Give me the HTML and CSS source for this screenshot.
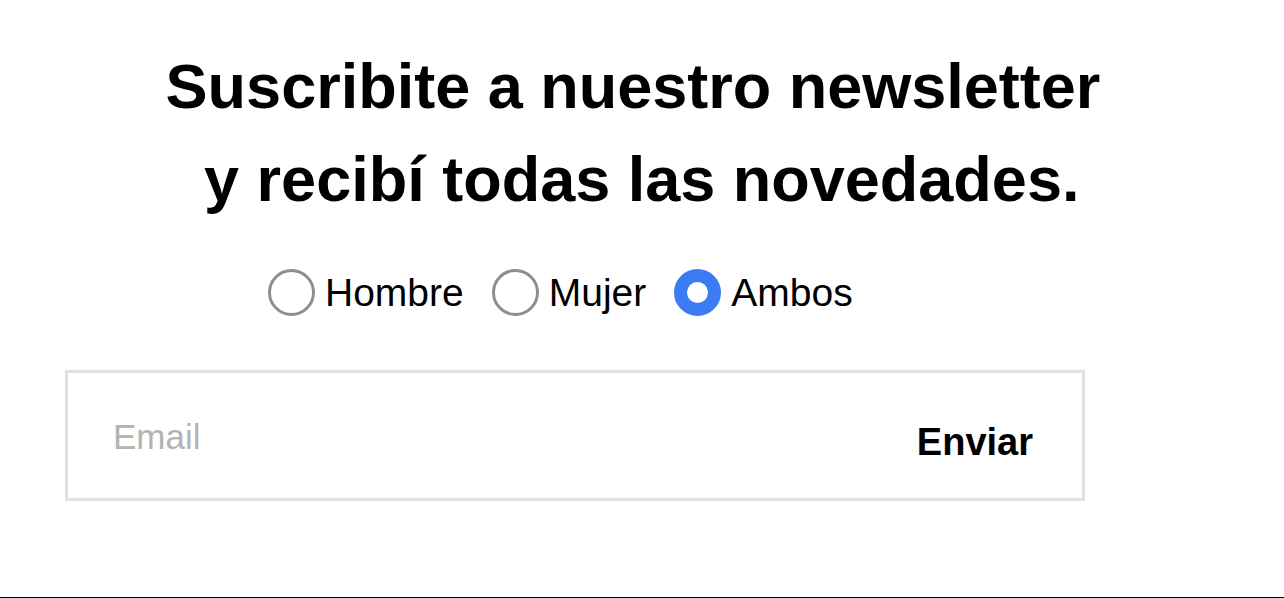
FILE: index.html
```html
<!DOCTYPE html>
<html lang="es">
<head>
<meta charset="utf-8">
<title>Newsletter</title>
<link rel="stylesheet" href="styles.css">
</head>
<body>
<div class="page">
  <h1 class="title">Suscribite a nuestro newsletter<br>&nbsp;y recibí todas las novedades.</h1>
  <div class="options">
    <label class="opt"><span class="radio"></span><span class="opt-text">Hombre</span></label>
    <label class="opt"><span class="radio"></span><span class="opt-text">Mujer</span></label>
    <label class="opt"><span class="radio checked"></span><span class="opt-text">Ambos</span></label>
  </div>
  <form class="form">
    <input class="email" type="text" placeholder="Email">
    <button class="send" type="button">Enviar</button>
  </form>
</div>
</body>
</html>
```
FILE: styles.css
```css
html, body {
  margin: 0;
  padding: 0;
  background: #fff;
}
.page {
  box-sizing: border-box;
  height: 598px;
  border-bottom: 1px solid #000;
  padding-top: 40px;
  font-family: "Liberation Sans", Arial, Helvetica, sans-serif;
  color: #000;
}
.title {
  margin: 0;
  width: 1266px;
  text-align: center;
  font-size: 63px;
  line-height: 93px;
  font-weight: bold;
}
.options {
  display: flex;
  align-items: center;
  gap: 28px;
  margin-top: 43px;
  padding-left: 268px;
}
.opt {
  display: flex;
  align-items: center;
  gap: 10px;
  font-size: 39px;
  line-height: 44px;
}
.radio {
  box-sizing: border-box;
  width: 47px;
  height: 47px;
  border-radius: 50%;
  border: 3px solid #8e8e8e;
  background: #fff;
}
.radio.checked {
  border: 13px solid #3b7cf5;
}
.form {
  box-sizing: border-box;
  display: flex;
  align-items: center;
  width: 1020px;
  height: 131px;
  margin: 54px 0 0 65px;
  border: 3px solid #e2e2e2;
}
.email {
  flex: 1;
  border: 0;
  outline: none;
  background: transparent;
  padding: 2px 0 0 45px;
  font-family: "Liberation Sans", Arial, Helvetica, sans-serif;
  font-size: 35px;
  color: #000;
}
.email::placeholder {
  color: #b3b3b3;
}
.send {
  border: 0;
  background: transparent;
  padding: 13px 49px 0 0;
  font-family: "Liberation Sans", Arial, Helvetica, sans-serif;
  font-size: 38px;
  font-weight: bold;
  color: #000;
}
```
